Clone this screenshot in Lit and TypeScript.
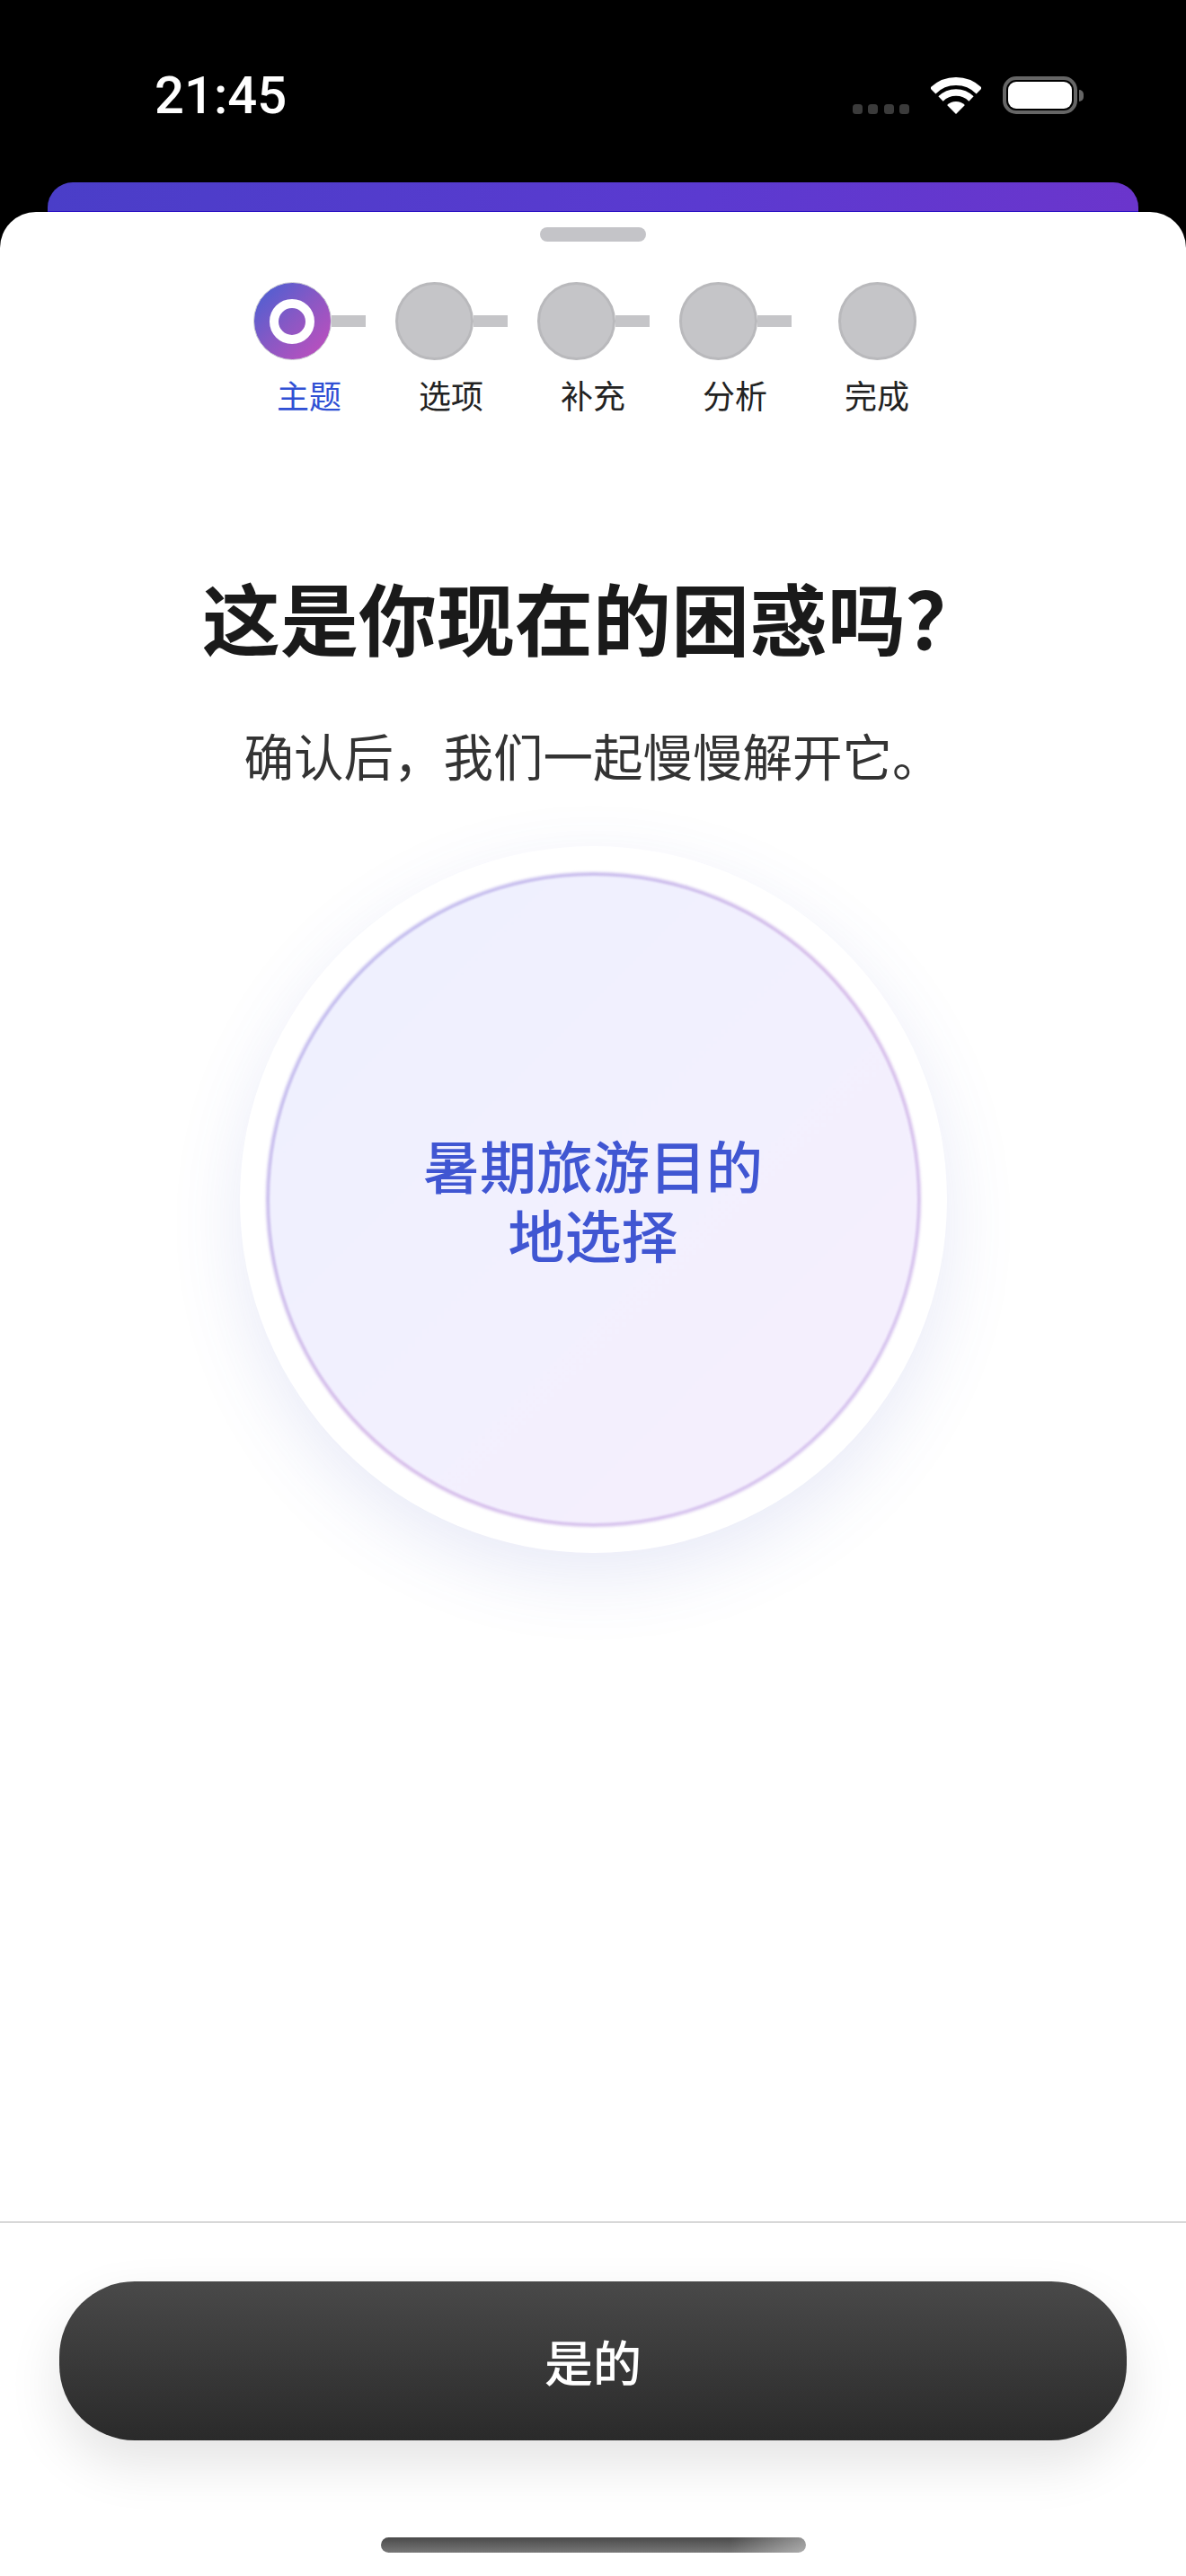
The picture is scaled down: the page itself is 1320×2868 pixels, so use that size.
import { LitElement, html, css } from "lit";
import { customElement } from "lit/decorators.js";

const STEPS = ["主题", "选项", "补充", "分析", "完成"];
const TITLE = "这是你现在的困惑吗\uFF1F";
const SUB = "确认后\uFF0C我们一起慢慢解开它\u3002";

@customElement("app-root")
export class AppRoot extends LitElement {
  static styles = css`
    :host {
      display: flex;
      flex-direction: column;
      width: 1320px;
      height: 2868px;
      overflow: hidden;
      background: #000;
      font-family: "Noto Sans CJK SC", "Liberation Sans", sans-serif;
    }
    .status {
      height: 203px;
      box-sizing: border-box;
      padding: 86px 114px 0 172px;
      display: flex;
      align-items: flex-start;
      justify-content: space-between;
      flex: none;
    }
    .time {
      font-family: Roboto, sans-serif;
      font-size: 58px;
      font-weight: 500;
      line-height: 41px;
      color: #fff;
    }
    .icons { display: flex; align-items: flex-start; }
    .dots { display: flex; gap: 6.5px; margin-top: 30px; margin-right: 24px; }
    .dots i { width: 11px; height: 11px; border-radius: 3.5px; background: #3b3b3b; }
    .wifi { width: 56px; height: 41px; display: block; margin-right: 24px; }
    .battery {
      width: 83px; height: 42px;
      box-sizing: border-box;
      border: 4px solid #666;
      border-radius: 15px;
      padding: 2px;
      margin-top: -1px;
    }
    .battery i { display: block; width: 100%; height: 100%; background: #fff; border-radius: 9px; }
    .cap { width: 5px; height: 13px; margin: 14px 0 0 2px; background: #666; border-radius: 0 5px 5px 0; }
    .back {
      flex: none;
      height: 33px;
      margin: 0 53px;
      box-sizing: border-box;
      border-radius: 28px 28px 0 0;
      border-bottom: 1px solid #2a10c4;
      background: linear-gradient(100deg, #4a3ec8 0%, #5b3ad0 60%, #6b35cc 100%);
    }
    .sheet {
      flex: 1;
      min-height: 0;
      display: flex;
      flex-direction: column;
      align-items: center;
      background: #fff;
      border-radius: 40px 40px 0 0;
    }
    .handle { width: 118px; height: 16px; margin-top: 17px; border-radius: 8px; background: #c4c4c8; flex: none; }
    .steps {
      display: grid;
      grid-template-columns: repeat(5, 125px);
      gap: 33px;
      margin-top: 45px;
      flex: none;
    }
    .step { display: flex; flex-direction: column; align-items: center; }
    .track { display: flex; align-items: center; width: 100%; justify-content: center; }
    .step:not(:last-child) .track { justify-content: flex-start; }
    .dot {
      width: 87px; height: 87px; flex: none;
      box-sizing: border-box;
      border-radius: 50%;
      background: #c5c5c8;
      border: 3px solid #b9b9bc;
      display: flex; align-items: center; justify-content: center;
    }
    .step.on .dot {
      border: 1.5px solid #c9c9d2;
      background: linear-gradient(135deg, #4f5fd2 8%, #8a58c4 50%, #bc4fbe 92%);
    }
    .mark { width: 50px; height: 50px; box-sizing: border-box; border: 10px solid #fff; border-radius: 50%; }
    .link { width: 38px; height: 13px; background: #c5c5c8; flex: none; }
    .label { margin-top: 14px; font-size: 36px; line-height: 48px; color: #222; white-space: nowrap; }
    .step.on .label { color: #3050d4; }
    h1 {
      margin: 167px 0 0;
      font-size: 87px;
      line-height: 112px;
      font-weight: 700;
      color: #1a1a1a;
      text-align: center;
      white-space: nowrap;
    }
    .sub {
      margin: 62px 0 0;
      font-size: 55.5px;
      line-height: 72px;
      font-weight: 400;
      color: #333;
      white-space: nowrap;
    }
    .disc {
      flex: none;
      margin-top: 66px;
      width: 787px; height: 787px;
      border-radius: 50%;
      background: #fff;
      box-shadow: 0 26px 80px rgba(80, 90, 190, 0.13);
      display: flex; align-items: center; justify-content: center;
    }
    .face {
      position: relative;
      isolation: isolate;
      width: 721px; height: 721px;
      border-radius: 50%;
      display: flex; align-items: center; justify-content: center;
    }
    .face::before {
      content: "";
      position: absolute;
      inset: -4px;
      z-index: -2;
      border-radius: 50%;
      filter: blur(1.5px);
      background: linear-gradient(135deg, #bcbdf0 0%, #d8bfea 50%, #d6c6f0 100%);
    }
    .face::after {
      content: "";
      position: absolute;
      inset: 0;
      z-index: -1;
      border-radius: 50%;
      filter: blur(1px);
      background: linear-gradient(135deg, #eef1fe 0%, #f2f0fe 50%, #f6effd 100%);
    }
    .topic {
      margin: 0 0 4px;
      width: 400px;
      text-align: center;
      font-size: 63px;
      line-height: 77px;
      font-weight: 500;
      color: #4056d2;
    }
    .spacer { flex: 1; min-height: 0; }
    .footer {
      flex: none;
      align-self: stretch;
      box-sizing: border-box;
      height: 395px;
      border-top: 2px solid #d8d8d8;
      display: flex;
      flex-direction: column;
      align-items: center;
    }
    .cta {
      margin-top: 65px;
      width: 1188px;
      height: 177px;
      flex: none;
      border: 0;
      padding: 0;
      border-radius: 84px;
      background: linear-gradient(180deg, #494949 0%, #2a2a2a 100%);
      box-shadow: 0 26px 60px rgba(0, 0, 0, 0.11);
      color: #fff;
      font-family: inherit;
      font-size: 54px;
      font-weight: 500;
    }
    .home {
      margin-top: 108px;
      width: 473px;
      height: 17px;
      flex: none;
      border-radius: 9px;
      background:
        linear-gradient(90deg, rgba(255,255,255,0) 82%, rgba(255,255,255,0.4) 100%),
        linear-gradient(180deg, #4a4a4a 0%, #777 100%);
    }
  `;

  render() {
    return html`
      <div class="status">
        <div class="time">21:45</div>
        <div class="icons">
          <div class="dots"><i></i><i></i><i></i><i></i></div>
          <svg class="wifi" viewBox="0 0 56 41" fill="none">
            <path d="M2.2 15.2A36.5 36.5 0 0 1 53.8 15.2" stroke="#fff" stroke-width="9" />
            <path d="M11 24A24 24 0 0 1 45 24" stroke="#fff" stroke-width="7.5" />
            <path d="M28 41L18.1 31.1A14 14 0 0 1 37.9 31.1Z" fill="#fff" />
          </svg>
          <div class="battery"><i></i></div>
          <div class="cap"></div>
        </div>
      </div>
      <div class="back"></div>
      <div class="sheet">
        <div class="handle"></div>
        <div class="steps">
          ${STEPS.map(
            (s, i) => html`
              <div class="step ${i === 0 ? "on" : ""}">
                <div class="track">
                  <div class="dot">${i === 0 ? html`<span class="mark"></span>` : ""}</div>
                  ${i < STEPS.length - 1 ? html`<div class="link"></div>` : ""}
                </div>
                <div class="label">${s}</div>
              </div>
            `
          )}
        </div>
        <h1>${TITLE}</h1>
        <p class="sub">${SUB}</p>
        <div class="disc">
          <div class="face"><p class="topic">暑期旅游目的地选择</p></div>
        </div>
        <div class="spacer"></div>
        <div class="footer">
          <button class="cta">是的</button>
          <div class="home"></div>
        </div>
      </div>
    `;
  }
}
